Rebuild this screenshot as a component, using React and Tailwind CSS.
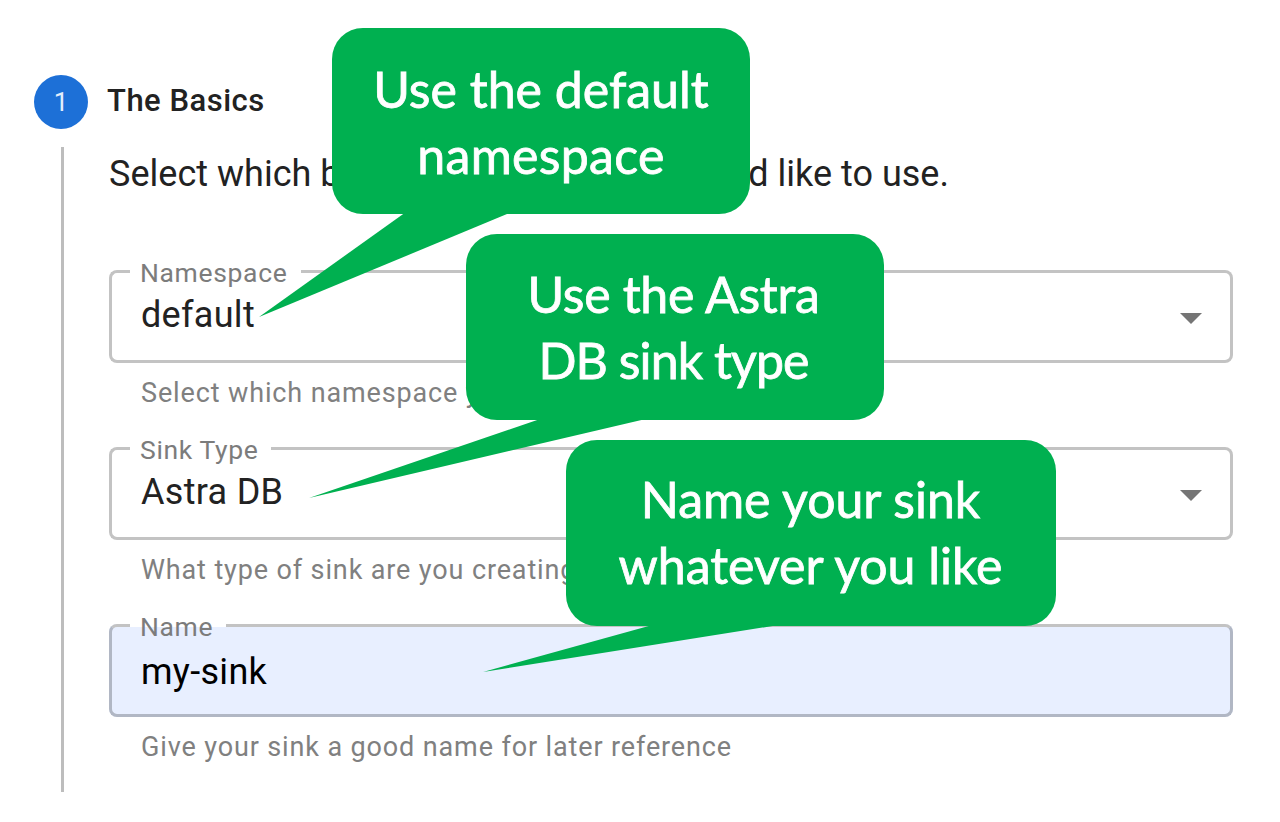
import React from "react";

function Field({ label, value, helper, notch, select, filled }) {
  const edge = filled ? "border-[#b1b7c4]" : "border-[#c3c3c3]";
  return (
    <div className="h-[177px]">
      <div className={`relative flex h-[93px] rounded-[8px] ${filled ? "bg-[#e8efff]" : "bg-white"}`}>
        <div className={`w-[21px] shrink-0 rounded-l-[8px] border-y-[3px] border-l-[3px] ${edge} border-t-[#c3c3c3]`} />
        <div className={`relative shrink-0 border-b-[3px] ${edge} ${notch}`}>
          <div className="absolute inset-x-0 top-0 h-[3px] bg-white" />
          <span className="absolute left-[10px] top-[-13px] whitespace-nowrap text-[26.5px] leading-[32px] tracking-[0.65px] text-[#7c7c7c]">
            {label}
          </span>
        </div>
        <div className={`grow rounded-r-[8px] border-y-[3px] border-r-[3px] ${edge} border-t-[#c3c3c3]`} />
        <div className={`absolute inset-x-8 flex h-[48px] items-center justify-between ${filled ? "top-[24px]" : "top-[21px]"}`}>
          <span className={`text-[36px] leading-[48px] tracking-[0.3px] ${filled ? "text-black" : "text-[#222]"}`}>
            {value}
          </span>
          {select && (
            <svg className="mt-[7px] mr-[-1px] h-[11px] w-[22px]" viewBox="0 0 22 11">
              <path d="M0 0H22L11 11Z" fill="#757575" />
            </svg>
          )}
        </div>
      </div>
      <p className="ml-8 mt-[14px] whitespace-nowrap text-[27px] leading-[32px] tracking-[0.87px] text-[#808080]">{helper}</p>
    </div>
  );
}

function Callout({ place, pad, lines, children }) {
  return (
    <div className={`absolute h-[186px] ${place}`}>
      {children}
      <div className={`relative flex h-full flex-col items-center rounded-[31px] bg-[#00b050] text-white ${pad}`}>
        {lines.map(([text, style]) => (
          <span key={text} className={`whitespace-nowrap font-['Lato',sans-serif] text-[50px] leading-[66px] [-webkit-text-stroke:0.8px_white] ${style}`}>
            {text}
          </span>
        ))}
      </div>
    </div>
  );
}

export default function App() {
  return (
    <main className="relative flex h-[822px] w-[1280px] overflow-hidden bg-white font-['Roboto',sans-serif]">
      <div className="ml-[34px] flex w-[54px] shrink-0 flex-col items-center pt-[75px]">
        <div className="flex size-[54px] items-center justify-center rounded-full bg-[#1d70d7] text-[26px] leading-none text-[#e4eefb]">
          1
        </div>
        <div className="ml-[2px] mt-[18px] h-[645px] w-[3px] bg-[#bdbdbd]" />
      </div>
      <section className="ml-[21px] w-[1124px] pt-[81px] text-[#222]">
        <h2 className="ml-[-2px] text-[31px] font-medium leading-[40px] tracking-[0.5px]">The Basics</h2>
        <p className="mt-[29px] flex w-[840px] justify-between whitespace-nowrap text-[36px] leading-[48px] tracking-[0.02px]">
          <span>Select which b</span>
          <span>d like to use.</span>
        </p>
        <div className="mt-[72px]">
          <Field label="Namespace" value="default" helper="Select which namespace y" notch="w-[171px]" select />
          <Field label="Sink Type" value="Astra DB" helper="What type of sink are you creating" notch="w-[141px]" select />
          <Field label="Name" value="my-sink" helper="Give your sink a good name for later reference" notch="w-[96px]" filled />
        </div>
      </section>

      <Callout
        place="left-[332px] top-[28px] w-[418px]"
        pad="pt-[28px]"
        lines={[["Use the default", ""], ["namespace", "tracking-[0.3px]"]]}
      >
        <svg className="absolute left-[-73px] top-[184px] h-[105px] w-[255px]" viewBox="0 0 255 105">
          <path d="M147 0H253L0 105Z" fill="#00b050" />
        </svg>
      </Callout>
      <Callout
        place="left-[466px] top-[234px] w-[418px]"
        pad="pt-[27px] pr-[3px]"
        lines={[["Use the Astra", "tracking-[-0.3px]"], ["DB sink type", "tracking-[-0.9px]"]]}
      >
        <svg className="absolute left-[-157px] top-[184px] h-[80px] w-[345px]" viewBox="0 0 345 80">
          <path d="M234 0H341L0 80Z" fill="#00b050" />
        </svg>
      </Callout>
      <Callout
        place="left-[566px] top-[440px] w-[490px]"
        pad="pt-[26px] pr-[1px]"
        lines={[["Name your sink", ""], ["whatever you like", ""]]}
      >
        <svg className="absolute left-[-83px] top-[184px] h-[48px] w-[305px]" viewBox="0 0 305 48">
          <path d="M173 0H302L0 48Z" fill="#00b050" />
        </svg>
      </Callout>
    </main>
  );
}
